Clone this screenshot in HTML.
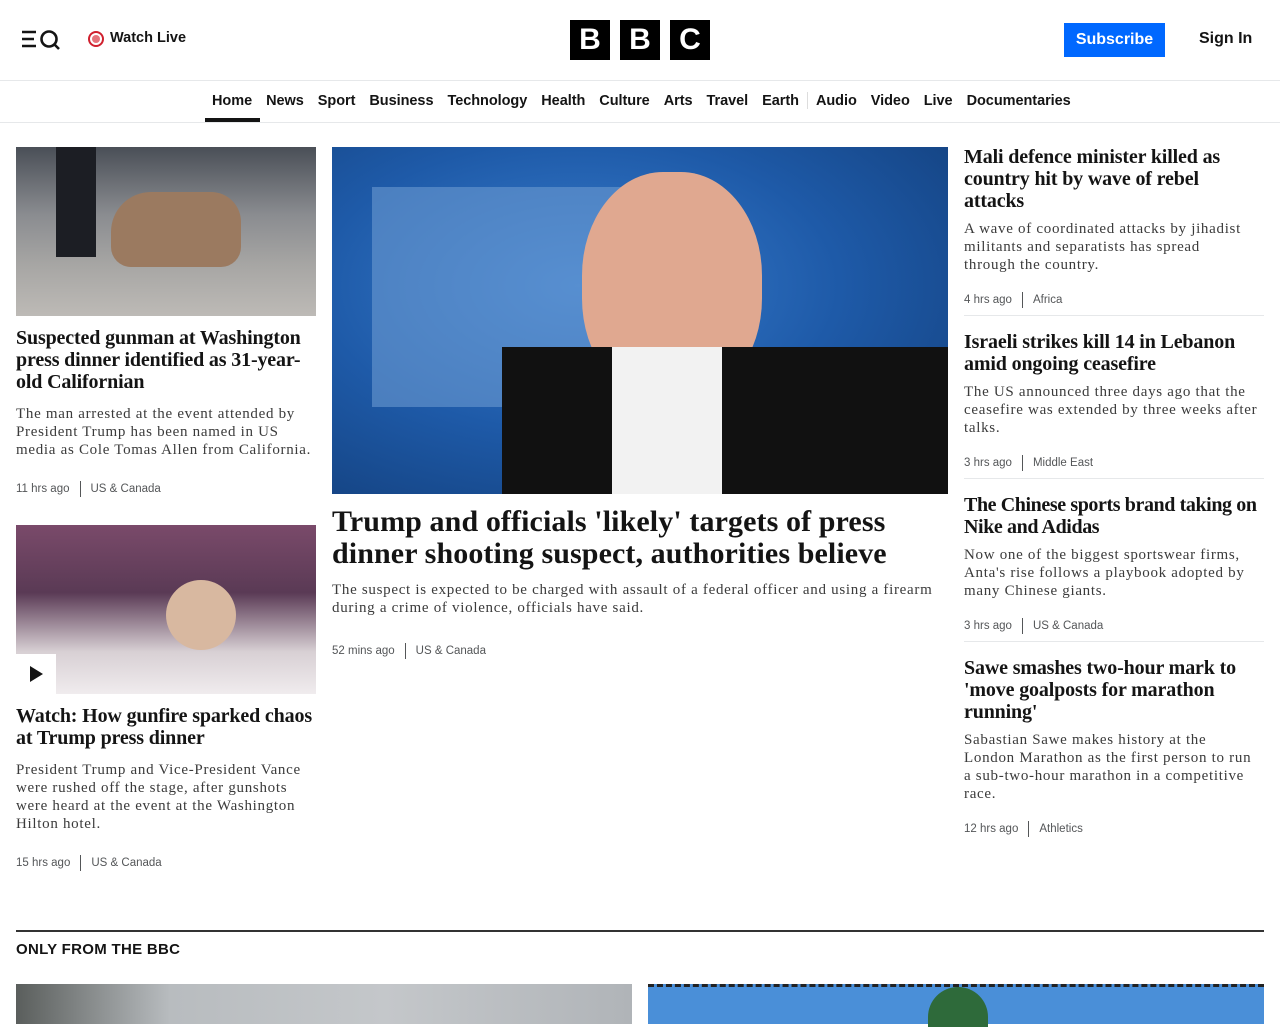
<!DOCTYPE html>
<html><head><meta charset="utf-8"><style>
*{margin:0;padding:0;box-sizing:border-box}
body{width:1280px;height:1024px;overflow:hidden;background:#fff;font-family:"Liberation Sans",sans-serif;color:#141414;position:relative}
.abs{position:absolute}
.hd{font-family:"Liberation Serif",serif;font-weight:bold;font-size:20px;line-height:22px;color:#141414;white-space:nowrap;letter-spacing:-0.15px}
.ds{font-family:"Liberation Serif",serif;font-size:15px;line-height:18px;color:#3b3b3b;white-space:nowrap;letter-spacing:0.7px}
.mt{font-size:11.5px;color:#545658;line-height:14px}
.mt span.sep{display:inline-block;width:1px;height:16px;background:#545658;vertical-align:middle;margin:0 10px}
nav a{color:#141414;text-decoration:none;font-size:14.5px;font-weight:bold;margin:0 7px;letter-spacing:-0.05px}
</style></head><body>
<svg class="abs" style="left:20px;top:28px" width="42" height="22" viewBox="0 0 42 22"><g stroke="#141414" stroke-width="2.6" fill="none"><path d="M2 4h14M2 11h12M2 18h14"/><circle cx="29" cy="11" r="7.5"/><path d="M34 16l5 5"/></g></svg>
<div class="abs" style="left:88px;top:31px;width:16px;height:16px;border-radius:50%;border:2px solid #d0202e;background:#fff"><div style="margin:2px;width:8px;height:8px;border-radius:50%;background:#e5737b"></div></div>
<div class="abs" style="left:110px;top:30px;font-size:14.5px;font-weight:bold">Watch Live</div>
<div class="abs" style="left:570px;top:20px;display:flex;gap:10px">
<div style="width:40px;height:40px;background:#000;color:#fff;font-weight:bold;font-size:30px;text-align:center;line-height:40px">B</div>
<div style="width:40px;height:40px;background:#000;color:#fff;font-weight:bold;font-size:30px;text-align:center;line-height:40px">B</div>
<div style="width:40px;height:40px;background:#000;color:#fff;font-weight:bold;font-size:30px;text-align:center;line-height:40px">C</div></div>
<div class="abs" style="left:1064px;top:23px;width:101px;height:34px;background:#0068ff;color:#fff;font-size:16px;font-weight:bold;text-align:center;line-height:34px">Subscribe</div>
<div class="abs" style="left:1199px;top:30px;font-size:16px;font-weight:bold">Sign In</div>
<div class="abs" style="left:0;top:80px;width:1280px;height:1px;background:#e6e8ea"></div>
<nav class="abs" style="left:205px;top:92px;white-space:nowrap"><a style="margin-left:7px">Home</a><a>News</a><a>Sport</a><a>Business</a><a>Technology</a><a>Health</a><a>Culture</a><a>Arts</a><a>Travel</a><a>Earth</a><span style="border-left:1px solid #ddd;margin:0 1px"></span><a>Audio</a><a>Video</a><a>Live</a><a>Documentaries</a></nav>
<div class="abs" style="left:205px;top:118px;width:55px;height:4px;background:#141414"></div>
<div class="abs" style="left:0;top:122px;width:1280px;height:1px;background:#e6e8ea"></div>
<!-- left col -->
<div class="abs" style="left:16px;top:147px;width:300px;height:169px;background:linear-gradient(180deg,#4a4f57 0%,#8a8c90 40%,#a7a6a4 70%,#bdbab6 100%)"><div style="position:absolute;left:95px;top:45px;width:130px;height:75px;background:#9b7a60;border-radius:40px 30px 20px 20px"></div><div style="position:absolute;left:40px;top:0;width:40px;height:110px;background:#1c1e24"></div></div>
<div class="abs hd" style="left:16px;top:327px">Suspected gunman at Washington<br>press dinner identified as 31-year-<br>old Californian</div>
<div class="abs ds" style="left:16px;top:405px">The man arrested at the event attended by<br>President Trump has been named in US<br>media as Cole Tomas Allen from California.</div>
<div class="abs mt" style="left:16px;top:481px">11 hrs ago<span class="sep"></span>US &amp; Canada</div>
<div class="abs" style="left:16px;top:525px;width:300px;height:169px;background:linear-gradient(180deg,#7a4a6a 0%,#5a3a55 40%,#d8d0d4 75%,#f0ecee 100%)"><div style="position:absolute;left:150px;top:55px;width:70px;height:70px;background:#d8b8a0;border-radius:50%"></div></div>
<div class="abs" style="left:16px;top:654px;width:40px;height:40px;background:#fff"><svg width="40" height="40"><path d="M14 12l13 8-13 8z" fill="#141414"/></svg></div>
<div class="abs hd" style="left:16px;top:705px">Watch: How gunfire sparked chaos<br>at Trump press dinner</div>
<div class="abs ds" style="left:16px;top:761px">President Trump and Vice-President Vance<br>were rushed off the stage, after gunshots<br>were heard at the event at the Washington<br>Hilton hotel.</div>
<div class="abs mt" style="left:16px;top:855px">15 hrs ago<span class="sep"></span>US &amp; Canada</div>
<!-- center -->
<div class="abs" style="left:332px;top:147px;width:616px;height:347px;background:radial-gradient(ellipse at 40% 40%,#3a7fd0 0%,#1e5aa8 50%,#123d78 100%);overflow:hidden"><div style="position:absolute;left:40px;top:40px;width:300px;height:220px;background:#6a9ad0;opacity:.6"></div><div style="position:absolute;left:250px;top:25px;width:180px;height:230px;background:#e0a890;border-radius:45%"></div><div style="position:absolute;left:170px;top:200px;width:446px;height:147px;background:#111"></div><div style="position:absolute;left:280px;top:200px;width:110px;height:147px;background:#f2f2f2"></div></div>
<div class="abs" style="left:332px;top:506px;white-space:nowrap;font-family:'Liberation Serif',serif;font-weight:bold;font-size:30px;line-height:32px;letter-spacing:0.1px">Trump and officials 'likely' targets of press<br>dinner shooting suspect, authorities believe</div>
<div class="abs ds" style="left:332px;top:581px">The suspect is expected to be charged with assault of a federal officer and using a firearm<br>during a crime of violence, officials have said.</div>
<div class="abs mt" style="left:332px;top:643px">52 mins ago<span class="sep"></span>US &amp; Canada</div>
<!-- right -->
<div class="abs hd" style="left:964px;top:146px">Mali defence minister killed as<br>country hit by wave of rebel<br>attacks</div>
<div class="abs ds" style="left:964px;top:220px">A wave of coordinated attacks by jihadist<br>militants and separatists has spread<br>through the country.</div>
<div class="abs mt" style="left:964px;top:292px">4 hrs ago<span class="sep"></span>Africa</div>
<div class="abs" style="left:964px;top:315px;width:300px;height:1px;background:#e6e8ea"></div>
<div class="abs hd" style="left:964px;top:331px">Israeli strikes kill 14 in Lebanon<br>amid ongoing ceasefire</div>
<div class="abs ds" style="left:964px;top:383px">The US announced three days ago that the<br>ceasefire was extended by three weeks after<br>talks.</div>
<div class="abs mt" style="left:964px;top:455px">3 hrs ago<span class="sep"></span>Middle East</div>
<div class="abs" style="left:964px;top:478px;width:300px;height:1px;background:#e6e8ea"></div>
<div class="abs hd" style="left:964px;top:494px;letter-spacing:-0.4px">The Chinese sports brand taking on<br>Nike and Adidas</div>
<div class="abs ds" style="left:964px;top:546px">Now one of the biggest sportswear firms,<br>Anta's rise follows a playbook adopted by<br>many Chinese giants.</div>
<div class="abs mt" style="left:964px;top:618px">3 hrs ago<span class="sep"></span>US &amp; Canada</div>
<div class="abs" style="left:964px;top:641px;width:300px;height:1px;background:#e6e8ea"></div>
<div class="abs hd" style="left:964px;top:657px">Sawe smashes two-hour mark to<br>'move goalposts for marathon<br>running'</div>
<div class="abs ds" style="left:964px;top:731px">Sabastian Sawe makes history at the<br>London Marathon as the first person to run<br>a sub-two-hour marathon in a competitive<br>race.</div>
<div class="abs mt" style="left:964px;top:821px">12 hrs ago<span class="sep"></span>Athletics</div>
<!-- only from bbc -->
<div class="abs" style="left:16px;top:930px;width:1248px;height:2px;background:#333"></div>
<div class="abs" style="left:16px;top:941px;font-size:15px;font-weight:bold;letter-spacing:0.3px">ONLY FROM THE BBC</div>
<div class="abs" style="left:16px;top:984px;width:616px;height:40px;background:linear-gradient(90deg,#5a5e5c 0%,#b8bcbf 25%,#c4c7ca 60%,#b0b4b8 100%)"></div>
<div class="abs" style="left:648px;top:984px;width:616px;height:40px;background:#4a8fd8;border-top:3px dashed #222"><div style="position:absolute;left:280px;top:0;width:60px;height:40px;background:#2e6a3a;border-radius:30px 30px 0 0"></div></div>
</body></html>
